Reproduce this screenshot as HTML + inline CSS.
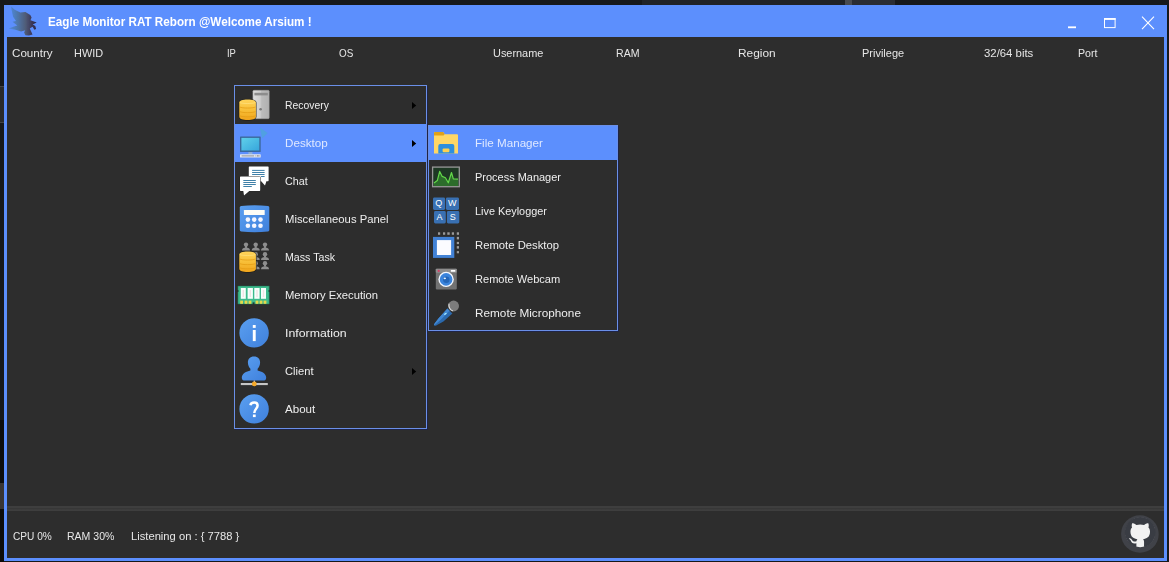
<!DOCTYPE html>
<html><head><meta charset="utf-8">
<style>
*{margin:0;padding:0;box-sizing:border-box}
html,body{width:1169px;height:562px;overflow:hidden;background:#17191b;font-family:"Liberation Sans",sans-serif;}
body{position:relative}
.abs{position:absolute}
#win{left:4px;top:5px;width:1163px;height:556px;background:#5c8ffd;}
#inner{left:7px;top:37px;width:1157px;height:521px;background:#2d2d2d;}
#title{left:48px;top:14px;color:#fff;font-weight:bold;font-size:12px;line-height:16px;white-space:nowrap;transform-origin:left center}
.h{top:46px;color:#e6e6e6;font-size:11.5px;line-height:14px;white-space:nowrap;transform-origin:left center}
.s{top:529px;color:#e6e6e6;font-size:11.5px;line-height:14px;white-space:nowrap;transform-origin:left center}
#sep{left:7px;top:506px;width:1157px;height:5px;background:linear-gradient(#3e3e3e 0,#3e3e3e 30%,#373737 45%,#373737 60%,#3e3e3e 75%)}
.menu{background:#2d2d2d;border:1px solid #6a8fe8;box-shadow:1px 1px 0 rgba(20,30,90,.55)}
.mi{position:absolute;left:0;width:100%;color:#eee;font-size:11.5px;line-height:14px;white-space:nowrap}
.mi span{position:absolute;transform-origin:left center}
.hl{background:#5c8ffd}
.hl span{color:#dfe8ff}
</style></head><body>
<div class="abs" style="left:642px;top:0;width:203px;height:5px;background:#202327"></div>
<div class="abs" style="left:845px;top:0;width:7px;height:5px;background:#484b50"></div>
<div class="abs" style="left:852px;top:0;width:43px;height:5px;background:#2a2d33"></div>
<div class="abs" style="left:0;top:483px;width:4px;height:26px;background:#383432"></div><div class="abs" style="left:0;top:86px;width:4px;height:37px;background:#2a2a2a;border-top:1px solid #444;border-bottom:1px solid #444"></div><div class="abs" style="left:0;top:420px;width:4px;height:63px;background:#0d0d0d"></div><div class="abs" style="left:0;top:509px;width:4px;height:53px;background:#0d0c0a"></div>
<div id="win" class="abs"></div>
<div id="inner" class="abs"></div>
<div id="title" class="abs" style="transform:scaleX(0.9732);margin-left:0.4px;">Eagle Monitor RAT Reborn @Welcome Arsium !</div>
<div class="abs h" style="left:12px;transform:scaleX(1.0101);margin-left:0.3px;">Country</div>
<div class="abs h" style="left:74px;transform:scaleX(0.9484);margin-left:0.3px;">HWID</div>
<div class="abs h" style="left:227px;transform:scaleX(0.8210);margin-left:-0.1px;">IP</div>
<div class="abs h" style="left:338px;transform:scaleX(0.8592);margin-left:0.6px;">OS</div>
<div class="abs h" style="left:492px;transform:scaleX(0.9491);margin-left:0.5px;">Username</div>
<div class="abs h" style="left:615px;transform:scaleX(0.9200);margin-left:0.8px;">RAM</div>
<div class="abs h" style="left:738px;transform:scaleX(1.0343);margin-left:-0.2px;">Region</div>
<div class="abs h" style="left:861px;transform:scaleX(0.9545);margin-left:0.5px;">Privilege</div>
<div class="abs h" style="left:984px;transform:scaleX(0.9880);margin-left:0.3px;">32/64 bits</div>
<div class="abs h" style="left:1077px;transform:scaleX(0.9227);margin-left:0.7px;">Port</div>
<div id="sep" class="abs"></div>
<div class="abs s" style="left:13px;transform:scaleX(0.8795);margin-left:0.3px;">CPU 0%</div>
<div class="abs s" style="left:67px;transform:scaleX(0.9154);margin-left:0.4px;">RAM 30%</div>
<div class="abs s" style="left:131px;transform:scaleX(0.9732);margin-left:0.0px;">Listening on : { 7788 }</div>
<div id="m1" class="abs menu" style="left:234px;top:85px;width:193px;height:344px">
  <div class="mi" style="top:0px;height:38px"><span style="left:50px;top:12px;transform:scaleX(0.9041);margin-left:0.1px;">Recovery</span></div>
  <div class="mi hl" style="top:38px;height:38px"><span style="left:50px;top:12px;transform:scaleX(1.0146);margin-left:0.1px;">Desktop</span></div>
  <div class="mi" style="top:76px;height:38px"><span style="left:50px;top:12px;transform:scaleX(0.9320);margin-left:0.1px;">Chat</span></div>
  <div class="mi" style="top:114px;height:38px"><span style="left:50px;top:12px;transform:scaleX(0.9819);margin-left:0.1px;">Miscellaneous Panel</span></div>
  <div class="mi" style="top:152px;height:38px"><span style="left:50px;top:12px;transform:scaleX(0.9259);margin-left:0.1px;">Mass Task</span></div>
  <div class="mi" style="top:190px;height:38px"><span style="left:50px;top:12px;transform:scaleX(0.9779);margin-left:0.1px;">Memory Execution</span></div>
  <div class="mi" style="top:228px;height:38px"><span style="left:50px;top:12px;transform:scaleX(1.0702);margin-left:0.1px;">Information</span></div>
  <div class="mi" style="top:266px;height:38px"><span style="left:50px;top:12px;transform:scaleX(0.9700);margin-left:0.1px;">Client</span></div>
  <div class="mi" style="top:304px;height:38px"><span style="left:50px;top:12px;transform:scaleX(1.0065);margin-left:0.1px;">About</span></div>
</div>
<div id="m2" class="abs menu" style="left:428px;top:125px;width:190px;height:206px">
  <div class="mi hl" style="top:0px;height:34px"><span style="left:46px;top:10px;transform:scaleX(1.0121);margin-left:0.2px;">File Manager</span></div>
  <div class="mi" style="top:34px;height:34px"><span style="left:46px;top:10px;transform:scaleX(0.9538);margin-left:0.2px;">Process Manager</span></div>
  <div class="mi" style="top:68px;height:34px"><span style="left:46px;top:10px;transform:scaleX(0.9455);margin-left:0.2px;">Live Keylogger</span></div>
  <div class="mi" style="top:102px;height:34px"><span style="left:46px;top:10px;transform:scaleX(0.9814);margin-left:0.2px;">Remote Desktop</span></div>
  <div class="mi" style="top:136px;height:34px"><span style="left:46px;top:10px;transform:scaleX(0.9618);margin-left:0.2px;">Remote Webcam</span></div>
  <div class="mi" style="top:170px;height:34px"><span style="left:46px;top:10px;transform:scaleX(1.0229);margin-left:0.2px;">Remote Microphone</span></div>
</div>
<svg class="abs" style="left:0;top:0" width="1169" height="562" viewBox="0 0 1169 562">
<defs>
  <linearGradient id="gGold" x1="0" y1="0" x2="0" y2="1"><stop offset="0" stop-color="#ffd45a"/><stop offset="0.55" stop-color="#f7bd35"/><stop offset="1" stop-color="#f0a41c"/></linearGradient>
  <linearGradient id="gTower" x1="0" y1="0" x2="1" y2="0"><stop offset="0" stop-color="#dedede"/><stop offset="0.5" stop-color="#cbcbcb"/><stop offset="0.52" stop-color="#bcbcbc"/><stop offset="1" stop-color="#b0b0b0"/></linearGradient>
  <linearGradient id="gScreen" x1="0" y1="0" x2="1" y2="1"><stop offset="0" stop-color="#5fd0ea"/><stop offset="1" stop-color="#37a6dc"/></linearGradient>
  <linearGradient id="gBlue" x1="0" y1="0" x2="1" y2="1"><stop offset="0" stop-color="#5a9ff0"/><stop offset="1" stop-color="#3f80dc"/></linearGradient>
  <linearGradient id="gEagle" x1="0" y1="0" x2="1" y2="0"><stop offset="0" stop-color="#4f8ae4"/><stop offset="0.3" stop-color="#4e78ae"/><stop offset="0.6" stop-color="#505c78"/><stop offset="0.82" stop-color="#3c3858"/><stop offset="1" stop-color="#26264a"/></linearGradient>
  <filter id="b3" x="-20%" y="-20%" width="140%" height="140%"><feGaussianBlur stdDeviation="0.35"/></filter>
  <filter id="b6" x="-20%" y="-20%" width="140%" height="140%"><feGaussianBlur stdDeviation="0.6"/></filter>
  <g id="db">
    <path d="M0.3,3.2 C0.3,1.2 3.5,0.2 8.6,0.2 C13.7,0.2 16.9,1.2 16.9,3.2 L16.9,17.4 C16.9,19.6 13.4,20.6 8.6,20.6 C3.8,20.6 0.3,19.6 0.3,17.4 Z" fill="url(#gGold)" stroke="#1c1a12" stroke-opacity="0.75" stroke-width="1.4" paint-order="stroke"/>
    <path d="M0.8,7.6 C3,9 14,9 16.4,7.6 M0.8,12.2 C3,13.6 14,13.6 16.4,12.2 M0.8,16.4 C3,17.8 14,17.8 16.4,16.4" fill="none" stroke="#e39a12" stroke-width="0.9" opacity="0.8"/>
    <path d="M1,3.2 C3,4.4 14,4.4 16.2,3.2" fill="none" stroke="#ffe487" stroke-width="0.8" opacity="0.8"/>
  </g>
  <g id="usr">
    <circle cx="0" cy="2.3" r="2.2"/><rect x="-1" y="3.6" width="2" height="2"/>
    <path d="M-4,8.2 C-4,6 -2.4,5.2 0,5.2 C2.4,5.2 4,6 4,8.2 Z"/>
  </g>
</defs>

<!-- eagle logo -->
<g filter="url(#b6)">
<path d="M11.1,6.5 L14.7,9.7 L20.4,12.5 L25.4,12 L30.3,15 L31.6,17.6 L30.5,20.2 L36.7,22.5 L32.7,24.4 L35.3,26 L36.1,29 L34.4,29.8 L32.5,26.8 L29.8,28.4 L32.5,34.4 L29,35.4 L25.4,35.3 L24.1,32.5 L25.2,30.3 L21.1,31.6 L15.4,29.8 L8.6,28.6 L13.3,26.8 L17.3,25.4 L12.5,21.8 L16,21.1 L13.1,16.8 L11.8,11.1 Z" fill="url(#gEagle)"/>
</g>

<!-- window controls -->
<rect x="1068" y="26.4" width="8" height="1.8" fill="#fff"/>
<rect x="1104.5" y="18.6" width="10.6" height="9" fill="none" stroke="#fff" stroke-width="1"/>
<rect x="1104" y="18.1" width="11.6" height="1.8" fill="#fff"/>
<path d="M1142,16.7 L1154,29.1 M1154,16.7 L1142,29.1" stroke="#fff" stroke-width="1.1" fill="none"/>

<!-- Recovery -->
<rect x="252.9" y="90.3" width="16.3" height="28.4" rx="1" fill="url(#gTower)" stroke="#9a9a9a" stroke-width="0.5"/>
<rect x="254.4" y="92.8" width="13.4" height="2.6" fill="#8c8c8c"/>
<path d="M261,96.5 V117.5" stroke="#c4c4c4" stroke-width="0.6"/>
<circle cx="260.6" cy="109.2" r="1.3" fill="#7a7a7a"/>
<use href="#db" x="239" y="99.4"/>

<!-- Desktop -->
<path d="M259.8,127.6 L267.6,133 L262.2,138.4 Z" fill="#3fb8b8" opacity="0.4"/>
<rect x="240" y="136.5" width="20.7" height="15.6" rx="0.6" fill="#3a689c"/>
<rect x="241.4" y="137.9" width="17.9" height="12.6" fill="url(#gScreen)"/>
<rect x="248.4" y="152.1" width="4" height="2" fill="#8fb0d8"/>
<rect x="240" y="154.2" width="20.7" height="3.4" rx="0.6" fill="#e3e7ee"/>
<rect x="241.6" y="155.4" width="12.4" height="1" fill="#8b9098"/>
<rect x="254.8" y="155.4" width="1.2" height="1" fill="#b0b4bb"/><rect x="256.8" y="155.4" width="1" height="1" fill="#555"/><rect x="258.4" y="155.4" width="1" height="1" fill="#555"/>

<!-- Chat -->
<path d="M249.4,166.5 H268 Q268.6,166.5 268.6,167.1 V180.6 Q268.6,181.2 268,181.2 H266.4 L265,185.6 L261.2,181.2 H249.4 Q248.8,181.2 248.8,180.6 V167.1 Q248.8,166.5 249.4,166.5 Z" fill="#fff"/>
<path d="M252.1,170.4 H264.6 M252.1,172.5 H264.6 M252.1,174.5 H264.6 M261,176.5 H264.6" stroke="#3f80a8" stroke-width="1"/>
<path d="M240.6,176.5 H259.6 Q260.2,176.5 260.2,177.1 V190.3 Q260.2,190.9 259.6,190.9 H249.3 L244,195.6 L243.3,190.9 H240.6 Q240,190.9 240,190.3 V177.1 Q240,176.5 240.6,176.5 Z" fill="#fff" stroke="#222" stroke-width="0.9" paint-order="stroke"/>
<path d="M243.3,180.5 H255.8 M243.3,182.5 H255.8 M243.3,184.5 H255.8 M243.3,186.5 H251.8" stroke="#3f80a8" stroke-width="1"/>

<!-- Misc panel -->
<path d="M241.2,205.9 Q254.5,204.5 268,205.9 Q269.3,206.1 269.3,207.4 V230 Q269.3,231.3 268,231.5 Q254.5,232.9 241.2,231.5 Q239.8,231.3 239.8,230 V207.4 Q239.8,206.1 241.2,205.9 Z" fill="url(#gBlue)"/>
<rect x="243.9" y="209.9" width="20.8" height="5.2" rx="0.5" fill="#fdfdf6"/>
<g fill="#f4f6ff"><circle cx="247.9" cy="219.6" r="2.3"/><circle cx="254.2" cy="219.6" r="2.3"/><circle cx="260.5" cy="219.6" r="2.3"/><circle cx="247.9" cy="225.7" r="2.3"/><circle cx="254.2" cy="225.7" r="2.3"/><circle cx="260.5" cy="225.7" r="2.3"/></g>

<!-- Mass Task -->
<g fill="#8e8e8e">
<use href="#usr" x="246" y="242.3"/><use href="#usr" x="255.7" y="242.3"/><use href="#usr" x="265" y="242.3"/>
<use href="#usr" x="255.7" y="251.9"/><use href="#usr" x="265" y="251.9"/>
<use href="#usr" x="255.7" y="261"/><use href="#usr" x="265" y="261"/>
</g>
<use href="#db" x="239" y="251.4"/>

<!-- Memory -->
<path d="M237.9,286 H269.2 V290 L268.2,291 L269.2,292 V304 H254.4 V302.6 H252.8 V304 H237.9 V292 L238.9,291 L237.9,290 Z" fill="#3dba8c" stroke="#1f6d52" stroke-width="0.5"/>
<g fill="#f6fffb"><rect x="240.8" y="288" width="5" height="10.8"/><rect x="247.6" y="288" width="5.3" height="10.8"/><rect x="254.3" y="288" width="5.3" height="10.8"/><rect x="261" y="288" width="5" height="10.8"/></g>
<g fill="#f2d8dc" opacity="0.7"><rect x="242.6" y="290" width="1.4" height="7"/><rect x="249.6" y="290" width="1.4" height="7"/><rect x="256.3" y="290" width="1.4" height="7"/><rect x="262.8" y="290" width="1.4" height="7"/></g>
<g fill="#e6d84a"><rect x="240.2" y="300.6" width="2.8" height="3.2"/><rect x="244.6" y="300.6" width="2.8" height="3.2"/><rect x="248.6" y="300.6" width="2.8" height="3.2"/><rect x="255.6" y="300.6" width="2.8" height="3.2"/><rect x="259.6" y="300.6" width="2.8" height="3.2"/><rect x="263.6" y="300.6" width="2.8" height="3.2"/></g>

<!-- Information -->
<circle cx="254.1" cy="332.9" r="14.7" fill="url(#gBlue)"/>
<rect x="252.8" y="325" width="2.9" height="2.9" fill="#fff"/><rect x="252.8" y="330" width="2.9" height="11.1" fill="#fff"/>

<!-- Client -->
<path d="M254,356.5 C258,356.5 260.1,359 260.1,362.6 C260.1,365.6 258.8,367.6 257.6,368.8 L257.6,370.4 C261.5,371.6 266.2,373 266.2,377.8 C266.2,379.8 265,380.6 263,380.6 H245 C243,380.6 241.8,379.8 241.8,377.8 C241.8,373 246.5,371.6 250.4,370.4 L250.4,368.8 C249.2,367.6 247.9,365.6 247.9,362.6 C247.9,359 250,356.5 254,356.5 Z" fill="url(#gBlue)"/>
<rect x="253.7" y="380.6" width="1.2" height="2.4" fill="#d8d8d8"/>
<rect x="240.8" y="383" width="27" height="2.1" fill="#c6c6c6"/>
<circle cx="254.3" cy="383.9" r="2.4" fill="#f5a828"/>

<!-- About -->
<circle cx="254.1" cy="408.9" r="14.7" fill="url(#gBlue)"/>
<path d="M250.4,405.2 C250.8,402.9 252.6,402.6 254.2,402.6 C256.4,402.6 257.6,403.9 257.6,405.6 C257.6,408.7 254.3,408.9 254.3,413" fill="none" stroke="#fff" stroke-width="2.5"/><rect x="252.9" y="414.5" width="2.8" height="2.6" fill="#fff"/>

<!-- arrows -->
<path d="M412,102 L416.2,105.5 L412,109 Z" fill="#000"/>
<path d="M412,140 L416.2,143.5 L412,147 Z" fill="#000"/>
<path d="M412,368 L416.2,371.5 L412,375 Z" fill="#000"/>

<!-- File Manager -->
<path d="M434,133 Q434,132 435,132 H442.6 Q443.4,132 443.8,132.8 L444.6,134.2 H457 Q458,134.2 458,135.2 V153.4 H434 Z" fill="#ffd766"/>
<path d="M434,133 Q434,132 435,132 H442.6 Q443.4,132 443.8,132.8 L444.6,134.2 L443.6,135.6 H434 Z" fill="#dfa11a"/>
<path d="M438.3,153.4 V146 Q438.3,144.1 440.2,144.1 H452.4 Q454.3,144.1 454.3,146 V153.4 Z" fill="#2f8fdd"/>
<rect x="442.6" y="148.4" width="6.8" height="3.9" rx="1" fill="#ffd150"/>

<!-- Process Manager -->
<rect x="432.6" y="167.1" width="26.7" height="19.6" fill="#1e3824" stroke="#989898" stroke-width="1.3"/>
<path d="M434,183 L437.3,180.6 L439.7,171.4 L442.2,176.4 L445.4,177.8 L448.3,182.8 L451.5,172.5 L453.3,178.9 L458,179.2 V186 H434 Z" fill="#3fae35" opacity="0.45"/>
<path d="M434,183 L437.3,180.6 L439.7,171.4 L442.2,176.4 L445.4,177.8 L448.3,182.8 L451.5,172.5 L453.3,178.9 L458,179.2" fill="none" stroke="#63d84a" stroke-width="1.2" stroke-linejoin="round"/>

<!-- Live Keylogger -->
<g fill="#3970b2"><rect x="433" y="197.6" width="12.1" height="12.4" rx="1.4"/><rect x="445.9" y="197.6" width="13.1" height="12.4" rx="1.4"/><rect x="434" y="211.1" width="11.8" height="12.4" rx="1.4"/><rect x="446.9" y="211.1" width="12.4" height="12.4" rx="1.4"/></g>
<g font-family="Liberation Sans, sans-serif" font-size="9" fill="#fff" text-anchor="middle">
<text x="438.8" y="206.4">Q</text><text x="452.2" y="206.2">W</text><text x="439.4" y="220">A</text><text x="452.8" y="220.2">S</text></g>

<!-- Remote Desktop -->
<g fill="#9a9a9a"><rect x="438" y="232.3" width="2.2" height="2.5"/><rect x="443" y="232.3" width="2.2" height="2.5"/><rect x="447.3" y="232.3" width="2.4" height="2.5"/><rect x="451.8" y="232.3" width="2.2" height="2.5"/><rect x="456.8" y="232.3" width="2.2" height="2.5"/>
<rect x="456.8" y="236.9" width="2.2" height="2.5"/><rect x="456.8" y="241.9" width="2.2" height="2.2"/><rect x="456.8" y="246.1" width="2.2" height="2.5"/><rect x="456.8" y="251.1" width="2.2" height="2.2"/></g>
<rect x="433" y="236.9" width="21.3" height="21" fill="#4282d6"/>
<rect x="436.9" y="240.1" width="14.2" height="14.9" fill="#fbfbff"/>

<!-- Remote Webcam -->
<rect x="435.8" y="268.8" width="21" height="20.6" rx="0.8" fill="#727272"/>
<rect x="435.8" y="268.8" width="21" height="4" rx="0.8" fill="#8e8e8e"/>
<circle cx="438.7" cy="270.9" r="1.1" fill="#d24068"/>
<rect x="450.8" y="270.1" width="4.6" height="1.6" rx="0.5" fill="#fff"/>
<circle cx="446.1" cy="279.4" r="7.7" fill="#f4f8ff"/>
<circle cx="446.1" cy="279.4" r="6.3" fill="#3a84dc"/>
<circle cx="446.3" cy="279.8" r="3.2" fill="#2466b8"/>
<ellipse cx="444.8" cy="278.4" rx="1.2" ry="0.8" fill="#e8f4ff"/>

<!-- Remote Microphone -->
<path d="M447.4,308.6 L452.4,313.4 L443.4,321.4 L436.2,325.4 Q434.6,326 434.1,325.4 Q433.7,324.6 434.6,323.6 L438.4,318.4 Z" fill="#2b69ad"/>
<path d="M447.4,308.6 L449.6,310.7 L441,319.6 L435,324.8 Q434.2,325.2 434.1,325 Q433.8,324.4 434.6,323.6 L438.4,318.4 Z" fill="#4187d2"/>
<ellipse cx="445.4" cy="313.9" rx="1.5" ry="0.8" transform="rotate(-35 445.4 313.9)" fill="#9fe8ff"/>
<circle cx="453.6" cy="306" r="5.4" fill="#7c7c7c"/>
<path d="M449,303.6 Q448.2,308.8 452.8,311" fill="none" stroke="#e2e2e2" stroke-width="1.1"/>

<!-- GitHub -->
<circle cx="1139.9" cy="534" r="18.8" fill="#404248"/>
<circle cx="1140.2" cy="532.4" r="14.8" fill="#f2f2f2"/>
<path transform="translate(1124.84 517) scale(1.92)" fill="#393c43" d="M8 0C3.58 0 0 3.58 0 8c0 3.54 2.29 6.53 5.47 7.59.4.07.55-.17.55-.38 0-.19-.01-.82-.01-1.49-2.01.37-2.53-.49-2.69-.94-.09-.23-.48-.94-.82-1.13-.28-.15-.68-.52-.01-.53.63-.01 1.08.58 1.23.82.72 1.21 1.87.87 2.33.66.07-.52.28-.87.51-1.07-1.78-.2-3.64-.89-3.64-3.95 0-.87.31-1.59.82-2.15-.08-.2-.36-1.02.08-2.12 0 0 .67-.21 2.2.82.64-.18 1.32-.27 2-.27.68 0 1.36.09 2 .27 1.53-1.04 2.2-.82 2.2-.82.44 1.1.16 1.92.08 2.12.51.56.82 1.27.82 2.15 0 3.07-1.87 3.75-3.65 3.95.29.25.54.73.54 1.48 0 1.07-.01 1.93-.01 2.2 0 .21.15.46.55.38A8.013 8.013 0 0016 8c0-4.42-3.58-8-8-8z"/>
</svg>

</body></html>
